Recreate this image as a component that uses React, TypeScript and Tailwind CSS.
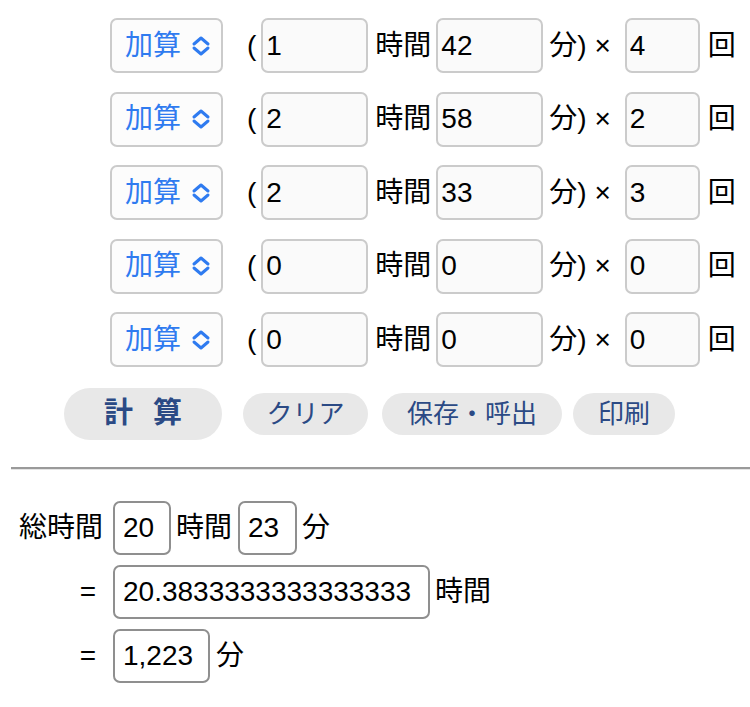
import React from 'react';

const font = { fontFamily: '"Liberation Sans", "Noto Sans CJK JP", sans-serif' };

const rows = [
  ['1', '42', '4'],
  ['2', '58', '2'],
  ['2', '33', '3'],
  ['0', '0', '0'],
  ['0', '0', '0'],
];

function Chevron() {
  return (
    <svg width="20" height="20" viewBox="0 0 20 20" fill="none" stroke="#2f7bf0" strokeWidth="3" strokeLinecap="round" strokeLinejoin="round">
      <path d="M3 8 L10 2 L17 8" />
      <path d="M3 12 L10 18 L17 12" />
    </svg>
  );
}

const topInput =
  'h-[55px] rounded-[7px] border-2 border-[#cbcbcb] bg-[#fafafa] pl-[3px] text-[28px] text-black outline-none';
const sumInput =
  'h-[54px] rounded-[7px] border-2 border-[#8f8f8f] bg-white pl-[8px] text-[28px] text-black outline-none';

export default function App() {
  return (
    <div className="min-h-screen bg-white text-[28px] text-black" style={font}>
      <div className="flex flex-col gap-[18.5px] pl-[110px] pt-[18px]">
        {rows.map((r, i) => (
          <div key={i} className="flex h-[55px] items-center">
            <div className="flex h-[55px] w-[113px] items-center gap-[10px] rounded-[7px] border-2 border-[#cbcbcb] bg-[#fcfcfc] pl-[13px] text-[#2f7bf0]">
              <span>加算</span>
              <Chevron />
            </div>
            <span className="ml-[24px]">(</span>
            <input defaultValue={r[0]} className={`${topInput} ml-[5px] w-[107px]`} style={font} />
            <span className="ml-[7px]">時間</span>
            <input defaultValue={r[1]} className={`${topInput} ml-[5px] w-[107px]`} style={font} />
            <span className="ml-[6px] whitespace-pre">分) ×</span>
            <input defaultValue={r[2]} className={`${topInput} ml-[14px] w-[75px]`} style={font} />
            <span className="ml-[8px]">回</span>
          </div>
        ))}
      </div>

      <div className="mt-[21px] flex items-center pl-[64px] text-[26px] text-[#2b4a85]">
        <button className="flex h-[52px] w-[158px] items-center justify-center gap-[20px] rounded-full bg-[#e8e8e8] text-[29px] font-bold">
          <span>計</span>
          <span>算</span>
        </button>
        <button className="ml-[21px] h-[42px] w-[125px] rounded-full bg-[#e8e8e8]">クリア</button>
        <button className="ml-[14px] h-[42px] w-[180px] rounded-full bg-[#e8e8e8]">保存・呼出</button>
        <button className="ml-[11px] h-[42px] w-[102px] rounded-full bg-[#e8e8e8]">印刷</button>
      </div>

      <div className="ml-[11px] mt-[27px] border-t-2 border-b border-t-[#9a9a9a] border-b-[#e4e4e4]" />

      <div className="mt-[31px] flex flex-col gap-[10px]">
        <div className="flex h-[54px] items-center">
          <span className="w-[113px] pr-[10px] text-right">総時間</span>
          <input defaultValue="20" className={`${sumInput} w-[58px]`} style={font} />
          <span className="ml-[5px]">時間</span>
          <input defaultValue="23" className={`${sumInput} ml-[6px] w-[59px]`} style={font} />
          <span className="ml-[5px]">分</span>
        </div>
        <div className="flex h-[54px] items-center">
          <span className="w-[113px] pr-[17px] text-right">=</span>
          <input defaultValue="20.3833333333333333" className={`${sumInput} w-[317px]`} style={font} />
          <span className="ml-[5px]">時間</span>
        </div>
        <div className="flex h-[54px] items-center">
          <span className="w-[113px] pr-[17px] text-right">=</span>
          <input defaultValue="1,223" className={`${sumInput} w-[97px]`} style={font} />
          <span className="ml-[6px]">分</span>
        </div>
      </div>
    </div>
  );
}
